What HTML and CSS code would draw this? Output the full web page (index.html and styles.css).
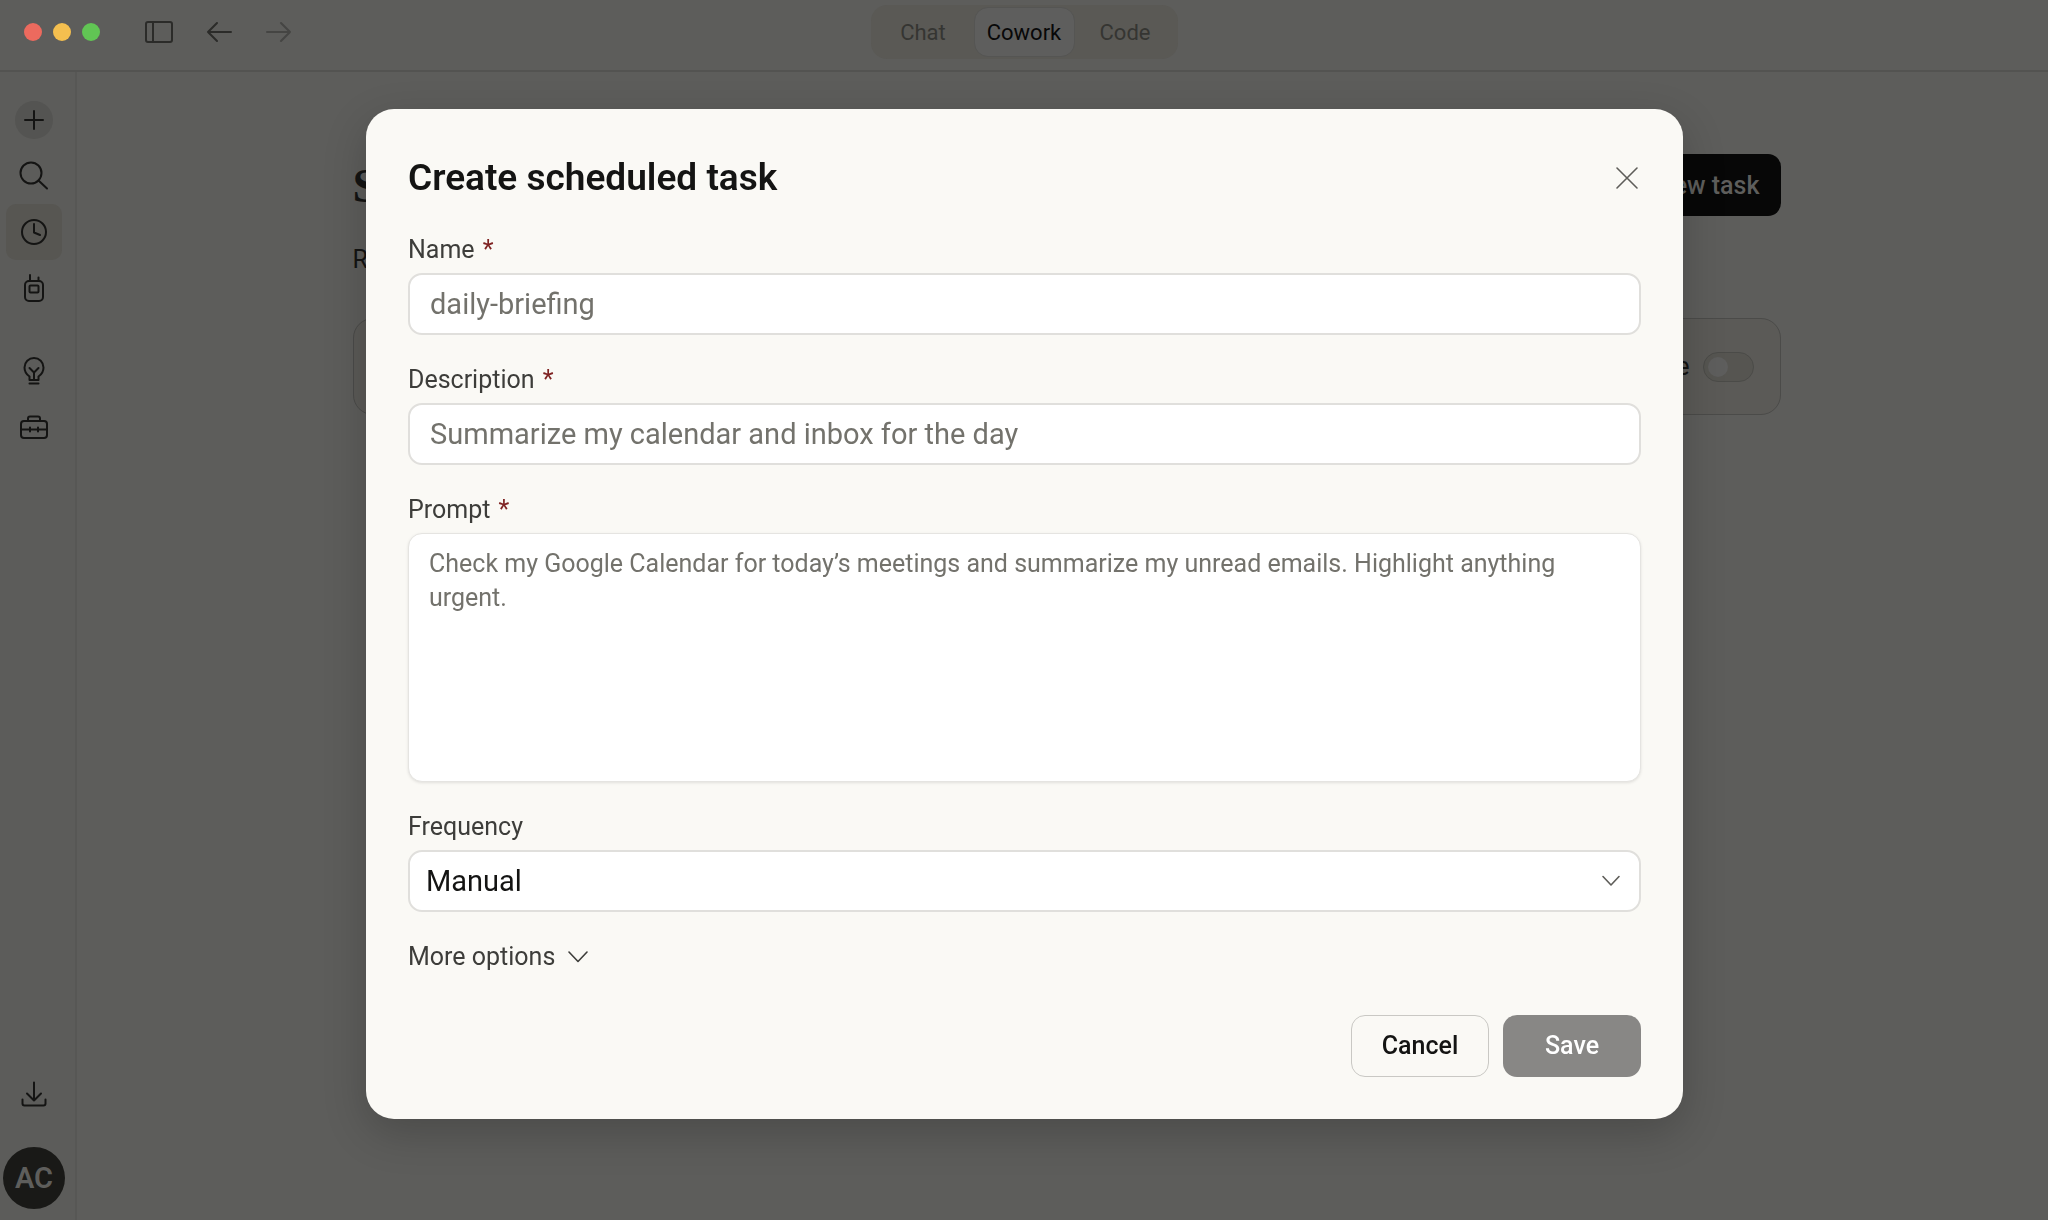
FILE: index.html
```html
<!DOCTYPE html>
<html lang="en">

<head>
    <title>Scheduled tasks</title>
    <meta charset="utf-8">
    <meta name="viewport" content="width=device-width, initial-scale=1.0">
    <link rel="stylesheet" href="styles.css">
</head>

<body>
    <header class="topbar">
        <div class="window-tools">
            <div class="lights">
                <span class="light red"></span>
                <span class="light yellow"></span>
                <span class="light green"></span>
            </div>
            <button class="tool" aria-label="Toggle sidebar">
                <svg width="32" height="32" viewBox="0 0 32 32"><rect x="3" y="6" width="26" height="20" rx="2" /><path d="M10 6v20" /></svg>
            </button>
            <button class="tool" aria-label="Back">
                <svg width="32" height="32" viewBox="0 0 32 32"><path d="M28 16H5M14 7l-9 9 9 9" /></svg>
            </button>
            <button class="tool faded" aria-label="Forward">
                <svg width="32" height="32" viewBox="0 0 32 32"><path d="M4 16h23M18 7l9 9-9 9" /></svg>
            </button>
        </div>
        <nav class="tabs">
            <button class="tab">Chat</button>
            <button class="tab active">Cowork</button>
            <button class="tab">Code</button>
        </nav>
    </header>

    <div class="app">
        <aside class="sidebar">
            <button class="side-item" aria-label="New">
                <span class="plus"><svg width="32" height="32" viewBox="0 0 32 32"><path d="M16 7v18M7 16h18" /></svg></span>
            </button>
            <button class="side-item" aria-label="Search">
                <svg width="32" height="32" viewBox="0 0 32 32"><circle cx="13" cy="13" r="10.5" /><path d="M20.5 20.5l8.500 8" /></svg>
            </button>
            <button class="side-item selected" aria-label="Scheduled">
                <svg width="32" height="32" viewBox="0 0 32 32"><circle cx="16" cy="16" r="12" /><path d="M16 8v8.500l6 2.500" /></svg>
            </button>
            <button class="side-item" aria-label="Dispatch">
                <svg width="32" height="32" viewBox="0 0 32 32"><rect x="7" y="9" width="18" height="20" rx="4" /><rect x="11.500" y="13.500" width="9" height="7" rx="1" /><path d="M12 9V3M20.500 9V5.500" /></svg>
            </button>
            <button class="side-item spaced" aria-label="Ideas">
                <svg width="32" height="32" viewBox="0 0 32 32"><path d="M11.500 25v-3.500C8.500 19.500 6.500 16.500 6.500 12.500a9.500 9.500 0 0 1 19 0c0 4-2 7-5 9V25zM16 25v-8M11.500 13l4.500 4.500 4.500-4.500M11.500 28.500h9" /></svg>
            </button>
            <button class="side-item" aria-label="Customize">
                <svg width="32" height="32" viewBox="0 0 32 32"><rect x="3" y="10" width="26" height="17" rx="3" /><path d="M10 10V7.500a2 2 0 0 1 2-2h8a2 2 0 0 1 2 2V10M3 18.500h9M14.500 18.500h3M20 18.500h9M12 16.500v4M20 16.500v4M12 18.500h8" /></svg>
            </button>
            <div class="side-bottom">
                <button class="side-item" aria-label="Downloads">
                    <svg width="32" height="32" viewBox="0 0 32 32"><path d="M16 3.500v18M9 14.500l7 7 7-7M4.500 20.500v4a2 2 0 0 0 2 2h19a2 2 0 0 0 2-2v-4" /></svg>
                </button>
                <button class="avatar">AC</button>
            </div>
        </aside>

        <main class="content">
            <div class="page">
                <div class="page-head">
                    <h1>S</h1>
                    <button class="new-task">New task</button>
                </div>
                <p class="intro">R</p>
                <div class="card">
                    <label for="awake">Keep awake</label>
                    <input class="toggle" type="checkbox" id="awake">
                </div>
            </div>
        </main>
    </div>

    <div class="scrim">
        <form class="modal" role="dialog" aria-labelledby="modal-title">
            <div class="modal-head">
                <h2 id="modal-title">Create scheduled task</h2>
                <button type="button" class="close" aria-label="Close">
                    <svg width="28" height="28" viewBox="0 0 28 28"><path d="M4 4l20 20M24 4L4 24" /></svg>
                </button>
            </div>

            <div class="field">
                <label for="name">Name <span class="req">*</span></label>
                <input type="text" id="name" placeholder="daily-briefing">
            </div>
            <div class="field">
                <label for="description">Description <span class="req">*</span></label>
                <input type="text" id="description" placeholder="Summarize my calendar and inbox for the day">
            </div>
            <div class="field">
                <label for="prompt">Prompt <span class="req">*</span></label>
                <textarea id="prompt" placeholder="Check my Google Calendar for today’s meetings and summarize my unread emails. Highlight anything urgent."></textarea>
            </div>
            <div class="field">
                <label for="frequency">Frequency</label>
                <div class="select-wrap">
                    <select id="frequency">
                        <option>Manual</option>
                    </select>
                    <svg width="20" height="20" viewBox="0 0 20 20"><path d="M2 5.500l8 8.500 8-8.500" /></svg>
                </div>
            </div>

            <button type="button" class="more">More options
                <svg width="20" height="20" viewBox="0 0 20 20"><path d="M1 5l9 9.500L19 5" /></svg>
            </button>

            <div class="actions">
                <button type="button" class="btn cancel">Cancel</button>
                <button type="submit" class="btn save" disabled>Save</button>
            </div>
        </form>
    </div>
</body>

</html>
```

FILE: styles.css
```css
* {
    box-sizing: border-box;
}

body {
    margin: 0;
    min-height: 100vh;
    display: flex;
    flex-direction: column;
    background: #5d5d5b;
    color: #141413;
    font-family: Roboto, "Liberation Sans", sans-serif;
    font-size: 25px;
}

button,
input,
select,
textarea {
    font-family: inherit;
    margin: 0;
}

button {
    border: none;
    background: none;
    padding: 0;
    color: inherit;
}

svg {
    display: block;
    flex: none;
    fill: none;
    stroke: currentColor;
    stroke-width: 1.6;
    stroke-linecap: round;
    stroke-linejoin: round;
}

/* top bar */
.topbar {
    height: 72px;
    display: grid;
    grid-template-columns: 1fr auto 1fr;
    padding-top: 5px;
    border-bottom: 2px solid #535351;
}

.window-tools {
    display: flex;
    align-items: center;
    height: 54px;
    padding-left: 24px;
    gap: 28px;
    color: #2b2b29;
}

.window-tools svg,
.sidebar svg {
    stroke-width: 2;
}

.lights {
    display: flex;
    gap: 11px;
    margin-right: 15px;
}

.light {
    width: 18px;
    height: 18px;
    border-radius: 50%;
}

.red {
    background: #ec6a5e;
}

.yellow {
    background: #f4bf4f;
}

.green {
    background: #61c554;
}

.window-tools .faded {
    color: #454543;
}

.tabs {
    display: flex;
    height: 54px;
    padding: 2px;
    border-radius: 16px;
    background: #5a5955;
}

.tab {
    width: 101px;
    border-radius: 14px;
    color: #353532;
    font-size: 22px;
}

.tab.active {
    background: #5e5e5d;
    border: 1px solid #555553;
    color: #080808;
}

/* sidebar */
.app {
    flex: 1;
    display: flex;
}

.sidebar {
    width: 77px;
    display: flex;
    flex-direction: column;
    padding: 20px 0 11px 6px;
    border-right: 2px solid #575755;
    background: #5c5c5a;
}

.side-item {
    width: 56px;
    height: 56px;
    display: flex;
    align-items: center;
    justify-content: center;
    border-radius: 10px;
}

.plus {
    padding: 3px;
    border-radius: 50%;
    background: #545452;
}

.selected {
    background: #575652;
}

.spaced {
    margin-top: 27px;
}

.side-bottom {
    margin-top: auto;
}

.avatar {
    width: 62px;
    height: 62px;
    margin: 24px 0 0 -3px;
    border-radius: 50%;
    background: #191917;
    color: #5e5e5c;
    font-size: 29px;
    font-weight: 600;
}

/* page under the dialog */
.content {
    flex: 1;
    padding: 82px 48px 0 56px;
}

.page {
    max-width: 1428px;
    margin: 0 auto;
}

.page-head {
    display: flex;
    justify-content: space-between;
    align-items: center;
    height: 62px;
}

h1 {
    margin: 0;
    font-family: "Liberation Serif", serif;
    font-size: 48px;
}

.new-task {
    height: 62px;
    padding: 0 21px;
    border-radius: 13px;
    background: #070707;
    color: #5e5e5c;
    font-size: 25px;
    font-weight: 500;
}

.intro {
    margin: 27px 0 41px;
    line-height: 34px;
}

.card {
    display: flex;
    align-items: center;
    justify-content: flex-end;
    gap: 13px;
    height: 97px;
    padding: 0 26px;
    border: 1px solid #4b4b49;
    border-radius: 20px;
    background: #5b5a57;
}

.toggle {
    appearance: none;
    display: flex;
    width: 51px;
    height: 30px;
    padding: 4px;
    border: 1px solid #4b4b48;
    border-radius: 15px;
    background: #565551;
}

.toggle::before {
    content: "";
    width: 20px;
    height: 20px;
    border-radius: 50%;
    background: #5e5e5d;
}

/* dialog */
.scrim {
    position: fixed;
    inset: 0;
    display: flex;
    align-items: center;
    justify-content: center;
    padding: 7px 48px 0 49px;
}

.modal {
    width: 100%;
    max-width: 1317px;
    display: flex;
    flex-direction: column;
    gap: 26px;
    padding: 42px;
    border-radius: 28px;
    background: #faf9f5;
    box-shadow: 0 14px 44px rgba(0, 0, 0, 0.2);
}

.modal-head {
    display: flex;
    justify-content: space-between;
    align-items: center;
    height: 54px;
}

h2 {
    margin: 0;
    font-size: 37px;
    font-weight: 600;
}

.close {
    color: #5e5d59;
}

.field {
    display: flex;
    flex-direction: column;
    gap: 4px;
}

.field label,
.more {
    color: #3d3d3a;
    font-size: 25px;
    line-height: 38px;
}

.req {
    margin-left: 2px;
    color: #7f2323;
}

.field input,
.field select,
.field textarea {
    width: 100%;
    height: 62px;
    padding: 0 20px;
    border: 2px solid #e0dfdc;
    border-radius: 14px;
    background: #fff;
    color: #141413;
    font-size: 29px;
}

.field textarea {
    display: block;
    height: 249px;
    padding: 13px 20px;
    border: 1px solid #e5e4e1;
    box-shadow: 0 1px 3px rgba(0, 0, 0, 0.1);
    font-size: 25px;
    line-height: 34px;
    resize: none;
}

::placeholder {
    color: #73726c;
    opacity: 1;
}

.select-wrap {
    display: grid;
    align-items: center;
}

.select-wrap select,
.select-wrap svg {
    grid-area: 1 / 1;
}

.select-wrap select {
    appearance: none;
    padding: 0 16px;
}

.select-wrap svg {
    justify-self: end;
    margin-right: 20px;
    color: #5e5d59;
    pointer-events: none;
}

.more {
    align-self: flex-start;
    display: flex;
    align-items: center;
    gap: 13px;
}

.actions {
    display: flex;
    justify-content: flex-end;
    gap: 14px;
    margin-top: 13px;
}

.btn {
    width: 138px;
    height: 62px;
    border-radius: 14px;
    font-size: 25px;
    font-weight: 500;
}

.cancel {
    border: 1px solid #c9c8c4;
}

.save {
    background: #888785;
    color: #fff;
}
```
